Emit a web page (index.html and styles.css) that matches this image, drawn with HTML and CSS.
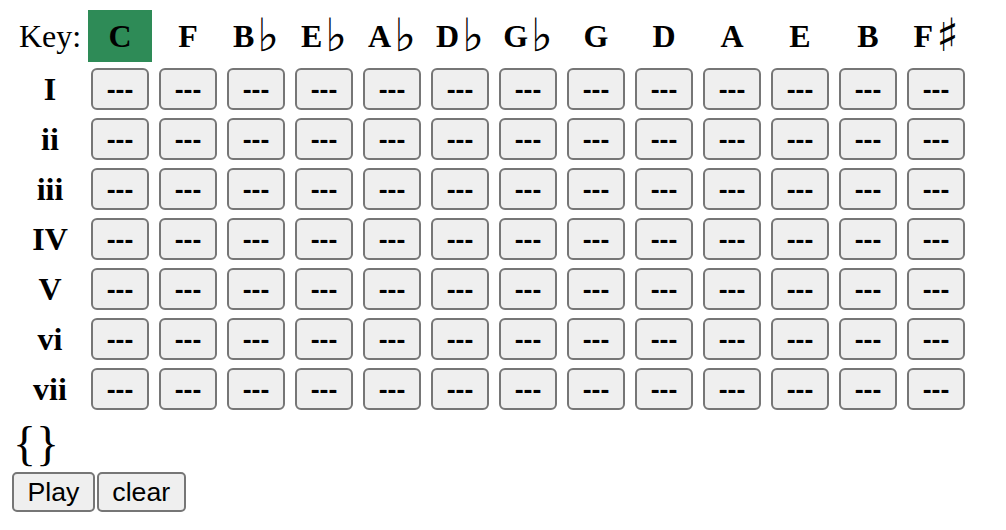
FILE: index.html
```html
<!DOCTYPE html>
<html lang="en">
<head>
    <meta charset="UTF-8">
    <title>Chord Keys</title>
    <link rel="stylesheet" href="styles.css">
</head>
<body>

    <!-- Chord grid -->
    <table class="chord-table">
        <thead>
            <tr>
                <th class="key-label">Key:</th>
                <th class="key selected">C</th>
                <th class="key">F</th>
                <th class="key">B<span class="accidental">&#9837;</span></th>
                <th class="key">E<span class="accidental">&#9837;</span></th>
                <th class="key">A<span class="accidental">&#9837;</span></th>
                <th class="key">D<span class="accidental">&#9837;</span></th>
                <th class="key">G<span class="accidental">&#9837;</span></th>
                <th class="key">G</th>
                <th class="key">D</th>
                <th class="key">A</th>
                <th class="key">E</th>
                <th class="key">B</th>
                <th class="key">F<span class="accidental">&#9839;</span></th>
            </tr>
        </thead>
        <tbody id="chord-rows"></tbody>
    </table>

    <div class="sequence">{}</div>

    <div class="controls">
        <button class="control-button">Play</button>
        <button class="control-button">clear</button>
    </div>

    <script>
        // Build one row per scale degree, one button per key
        let degrees = ["I", "ii", "iii", "IV", "V", "vi", "vii"];
        let rows = document.getElementById("chord-rows");

        degrees.forEach((d) => {
            let html = `<tr><th class="degree">${d}</th>`;
            for (let i = 0; i < 13; i++) {
                html += `<td><button class="chord-button">---</button></td>`;
            }
            html += `</tr>`;
            rows.innerHTML += html;
        });
    </script>

</body>
</html>
```

FILE: styles.css
```css
body {
    margin: 0;
    padding: 6px 12px;
    font-family: "Liberation Serif", "DejaVu Serif", serif;
    color: black;
    background: white;
}
.chord-table {
    border-spacing: 4px;
}
.chord-table th, .chord-table td {
    width: 64px;
    padding: 0;
    text-align: center;
    font-size: 32px;
}
.chord-table th:first-child {
    width: 68px;
}
thead th {
    height: 52px;
}
tbody th, tbody td {
    height: 46px;
}
.key-label {
    font-weight: normal;
}
.key {
    font-weight: bold;
    white-space: nowrap;
}
.accidental {
    font-family: "DejaVu Sans", sans-serif;
    font-weight: normal;
    font-size: 46px;
    line-height: 0;
    vertical-align: -4px;
    margin-left: 3px;
}
.selected {
    background: seagreen;
}
.degree {
    font-weight: bold;
}
.chord-button {
    width: 58px;
    height: 42px;
    padding: 0;
    font-family: "Liberation Sans", Arial, sans-serif;
    font-size: 26.67px;
    font-weight: bold;
    color: black;
    background: #efefef;
    border: 2px solid #767676;
    border-radius: 6px;
}
.sequence {
    font-size: 48px;
    line-height: 56px;
    padding-left: 1px;
}
.controls {
    display: flex;
    gap: 2px;
}
.control-button {
    height: 40px;
    padding: 0 13.5px;
    font-family: "Liberation Sans", Arial, sans-serif;
    font-size: 26.67px;
    color: black;
    background: #efefef;
    border: 2px solid #767676;
    border-radius: 5px;
}
```
